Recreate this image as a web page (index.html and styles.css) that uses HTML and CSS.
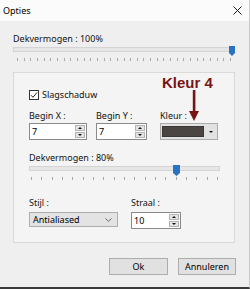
FILE: index.html
```html
<!DOCTYPE html>
<html lang="nl">
<head>
    <meta charset="UTF-8">
    <title>Opties</title>
    <link rel="stylesheet" href="styles.css">
</head>
<body>
<div class="dialog">
    <div class="titlebar">
        <span class="title">Opties</span>
        <svg class="close" width="9" height="9" viewBox="0 0 9 9"><path d="M0.5 0.5L8.5 8.5M8.5 0.5L0.5 8.5" stroke="#1e1e1e" stroke-width="1"/></svg>
    </div>
    <div class="body">
        <div class="label">Dekvermogen : 100%</div>
        <div class="slider slider-wide">
            <div class="track"></div>
            <svg class="thumb thumb-full" width="6" height="10" viewBox="0 0 6 10"><path d="M0 0H6V7L3 10L0 7Z" fill="#2a72c6"/></svg>
            <div class="ticks">
                <i></i><i></i><i></i><i></i><i></i><i></i><i></i><i></i><i></i><i></i><i></i>
                <i></i><i></i><i></i><i></i><i></i><i></i><i></i><i></i><i></i><i></i><i></i>
                <i></i><i></i><i></i><i></i><i></i><i></i><i></i><i></i><i></i><i></i><i></i>
            </div>
        </div>

        <div class="group">
            <div class="note">Kleur 4</div>
            <svg class="note-arrow" width="10" height="31" viewBox="0 0 10 31"><rect x="3.8" y="0" width="2.6" height="23" fill="#7a1313"/><path d="M0 21H10L5 31Z" fill="#7a1313"/></svg>

            <div class="check-row">
                <span class="checkbox"><svg width="8" height="8" viewBox="0 0 8 8"><path d="M1 4.2L3 6.3L7 1.5" fill="none" stroke="#222" stroke-width="1"/></svg></span>
                <span>Slagschaduw</span>
            </div>

            <div class="fields">
                <div class="field">
                    <div class="label">Begin X :</div>
                    <div class="spin-input spin-x">
                        <span class="value">7</span>
                        <span class="spin"><b class="up"></b><b class="down"></b></span>
                    </div>
                </div>
                <div class="field">
                    <div class="label">Begin Y :</div>
                    <div class="spin-input spin-y">
                        <span class="value">7</span>
                        <span class="spin"><b class="up"></b><b class="down"></b></span>
                    </div>
                </div>
                <div class="field">
                    <div class="label">Kleur :</div>
                    <div class="color-pick">
                        <span class="swatch"></span>
                        <span class="drop"><b class="down"></b></span>
                    </div>
                </div>
            </div>

            <div class="label label-gap">Dekvermogen : 80%</div>
            <div class="slider slider-inner">
                <div class="track"></div>
                <svg class="thumb thumb-80" width="7" height="11" viewBox="0 0 7 11"><path d="M0 0H7V8L3.5 11L0 8Z" fill="#2a72c6"/></svg>
                <div class="ticks">
                    <i></i><i></i><i></i><i></i><i></i><i></i><i></i><i></i><i></i><i></i>
                    <i></i><i></i><i></i><i></i><i></i><i></i><i></i><i></i><i></i>
                </div>
            </div>

            <div class="fields-bottom">
                <div class="field">
                    <div class="label">Stijl :</div>
                    <div class="select">
                        <span>Antialiased</span>
                        <svg width="7" height="4" viewBox="0 0 7 4"><path d="M0.5 0.5L3.5 3.3L6.5 0.5" fill="none" stroke="#6a6a6a" stroke-width="1"/></svg>
                    </div>
                </div>
                <div class="field">
                    <div class="label">Straal :</div>
                    <div class="spin-input spin-straal">
                        <span class="value">10</span>
                        <span class="spin"><b class="up"></b><b class="down"></b></span>
                    </div>
                </div>
            </div>
        </div>

        <div class="buttons">
            <button class="btn">Ok</button>
            <button class="btn">Annuleren</button>
        </div>
    </div>
</div>
</body>
</html>
```

FILE: styles.css
```css
* {
    box-sizing: border-box;
}

body {
    margin: 0;
    font-family: "Noto Sans", "Open Sans", sans-serif;
    font-size: 9px;
    color: #111;
}

.dialog {
    width: 250px;
    height: 289px;
    background: #efefef;
    border-right: 1px solid #c9c9c9;
    border-bottom: 2px solid #3a3a3a;
}

.titlebar {
    height: 21px;
    display: flex;
    align-items: center;
    justify-content: space-between;
    padding: 0 7px 0 3px;
    background: #fbfbfb;
    line-height: 21px;
}

.title {
    color: #000;
}

.body {
    padding: 12px 14px 0 13px;
}

.label {
    line-height: 12px;
    white-space: nowrap;
}

/* sliders */
.slider {
    position: relative;
    height: 18px;
}

.track {
    position: absolute;
    left: 0;
    right: 0;
    top: 2px;
    height: 5px;
    background: #e6e6e6;
    border: 1px solid #d4d4d4;
}

.thumb {
    position: absolute;
    top: 1px;
}

.thumb-full {
    right: 0;
}

.thumb-80 {
    left: 144px;
}

.ticks {
    position: absolute;
    left: 0;
    right: 0;
    top: 13px;
    height: 3px;
    display: flex;
    justify-content: space-between;
}

.ticks i {
    width: 1px;
    height: 3px;
    background: #a8a8a8;
}

.slider-wide .ticks {
    padding: 0 4px;
}

.slider-inner .ticks {
    padding: 0 2px;
}

/* group box */
.group {
    position: relative;
    margin-top: 9px;
    border: 1px solid #d9d9d9;
    background: #f4f4f4;
    padding: 16px 14px 13px 15px;
}

.note {
    position: absolute;
    left: 148px;
    top: 2px;
    font-family: "Liberation Sans", Arial, sans-serif;
    font-weight: bold;
    font-size: 15px;
    line-height: 15px;
    color: #7a1313;
}

.note-arrow {
    position: absolute;
    left: 175px;
    top: 17px;
}

.check-row {
    display: flex;
    align-items: center;
    gap: 3px;
    height: 12px;
    line-height: 12px;
}

.checkbox {
    width: 10px;
    height: 10px;
    border: 1px solid #333;
    background: #fff;
    display: flex;
    align-items: center;
    justify-content: center;
}

.fields {
    display: grid;
    grid-template-columns: 67px 64px 58px;
    margin-top: 9px;
}

.fields .label {
    margin-bottom: 1px;
}

.spin-input {
    display: flex;
    align-items: stretch;
    height: 17px;
    border: 1px solid #8a8a8a;
    background: #fff;
    padding: 1px 1px 1px 2px;
}

.spin-x {
    width: 58px;
}

.spin-y {
    width: 51px;
}

.spin-straal {
    width: 50px;
}

.value {
    flex: 1;
    line-height: 13px;
    color: #000;
}

.spin {
    width: 10px;
    display: flex;
    flex-direction: column;
    gap: 1px;
}

.spin b {
    flex: 1;
    background: #e4e4e4;
    border: 1px solid #b4b4b4;
    position: relative;
}

.spin b::after,
.drop b::after {
    content: "";
    position: absolute;
    left: 50%;
    top: 50%;
    margin-left: -2px;
    border-left: 2px solid transparent;
    border-right: 2px solid transparent;
}

.up::after {
    margin-top: -1px;
    border-bottom: 2px solid #111;
}

.down::after {
    margin-top: -1px;
    border-top: 2px solid #111;
}

.color-pick {
    display: flex;
    width: 58px;
    height: 17px;
    border: 1px solid #acacac;
    background: #e2e2e2;
    padding: 2px 0 2px 1px;
}

.swatch {
    flex: 1;
    background: #4a4542;
    border: 1px solid #3a3634;
}

.drop {
    width: 13px;
    position: relative;
}

.drop b {
    position: absolute;
    inset: 0;
}

.label-gap {
    margin-top: 12px;
}

.slider-inner {
    margin-top: 0;
}

.fields-bottom {
    display: grid;
    grid-template-columns: 102px 50px;
    margin-top: 15px;
}

.fields-bottom .label {
    margin-bottom: 3px;
}

.select {
    display: flex;
    align-items: center;
    justify-content: space-between;
    width: 89px;
    height: 15px;
    margin-top: 1px;
    padding: 0 5px 0 3px;
    background: #e3e3e3;
    border: 1px solid #adadad;
    color: #000;
}

/* buttons */
.buttons {
    display: flex;
    justify-content: flex-end;
    gap: 10px;
    margin-top: 15px;
    margin-right: -1px;
}

.btn {
    height: 17px;
    width: 59px;
    padding: 0;
    font-family: inherit;
    font-size: 9px;
    color: #000;
    background: #e1e1e1;
    border: 1px solid #adadad;
}

.btn + .btn {
    width: 58px;
}
```
